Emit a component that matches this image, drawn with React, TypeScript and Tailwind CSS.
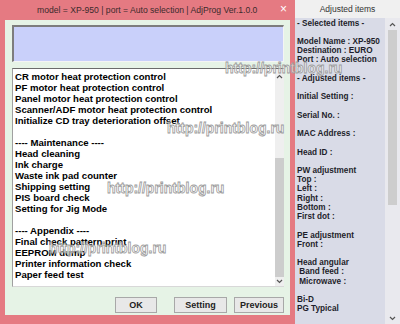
import React from "react";

const listLines = [
  "CR motor heat protection control",
  "PF motor heat protection control",
  "Panel motor heat protection control",
  "Scanner/ADF motor heat protection control",
  "Initialize CD tray deterioration offset",
  "",
  "---- Maintenance ----",
  "Head cleaning",
  "Ink charge",
  "Waste ink pad counter",
  "Shipping setting",
  "PIS board check",
  "Setting for Jig Mode",
  "",
  "---- Appendix ----",
  "Final check pattern print",
  "EEPROM dump",
  "Printer information check",
  "Paper feed test",
];

const rightLines = [
  "- Selected items -",
  "",
  "Model Name : XP-950",
  "Destination : EURO",
  "Port : Auto selection",
  "",
  "- Adjusted items -",
  "",
  "Initial Setting :",
  "",
  "Serial No. :",
  "",
  "MAC Address :",
  "",
  "Head ID :",
  "",
  "PW adjustment",
  "Top :",
  "Left :",
  "Right :",
  "Bottom :",
  "First dot :",
  "",
  "PE adjustment",
  "Front :",
  "",
  "Head angular",
  "\u00a0Band feed :",
  "\u00a0Microwave :",
  "",
  "Bi-D",
  "PG Typical",
];

function Chevron({ up }: { up?: boolean }) {
  return (
    <svg width="7" height="5" viewBox="0 0 7 5">
      <path
        d={up ? "M1 4 L3.5 1.5 L6 4" : "M1 1 L3.5 3.5 L6 1"}
        fill="none"
        stroke="#555"
        strokeWidth="1.2"
      />
    </svg>
  );
}

const marks = [
  { x: 225, y: 61 },
  { x: 167, y: 121 },
  { x: 107, y: 181 },
  { x: 49, y: 241 },
];

export default function App() {
  return (
    <div
      className="w-[400px] h-[324px] flex overflow-hidden relative bg-white"
      style={{ fontFamily: '"Liberation Sans", Arial, sans-serif' }}
    >
      {/* Left window */}
      <div className="w-[295px] h-full bg-[#e57a82] flex flex-col shrink-0">
        <div className="h-[20px] flex items-center pl-[37px] pr-[6px]">
          <span className="text-[8.6px] text-[#3a2a2c] leading-none whitespace-nowrap">
            model = XP-950 | port = Auto selection | AdjProg Ver.1.0.0
          </span>
          <span className="flex-1" />
          <span className="text-[12px] text-white leading-none mr-[2px] mb-[2px]">×</span>
        </div>
        <div className="mx-[5px] flex-1 bg-[#e6f3e6] flex flex-col pt-[5px] pl-[7px] pr-[6px]">
          <div className="h-[37px] bg-[#c9d0fa] border-t-2 border-l-2 border-[#7d7d7d] border-r border-b border-r-[#f4f4f4] border-b-[#f4f4f4]" />
          <div className="mt-[6px] h-[219px] bg-white border-t border-t-[#6b6b6b] border-l border-l-[#a0a0a0] border-b border-b-[#d8d8d8] flex">
            <div className="flex-1 pl-[2px] pt-[2px]">
              {listLines.map((l, i) => (
                <div
                  key={i}
                  className="h-[11px] leading-[11px] text-[9.6px] font-bold text-black whitespace-nowrap"
                >
                  {l || "\u00a0"}
                </div>
              ))}
            </div>
            <div className="w-[9px] bg-[#efefef] flex flex-col items-center">
              <div className="h-[12px] flex items-center justify-center pt-[3px]">
                <Chevron up />
              </div>
              <div className="flex-1 flex flex-col w-full">
                <div className="h-[77px]" />
                <div className="flex-1 bg-[#cdcdcd]" />
              </div>
              <div className="h-[9px] flex items-center justify-center">
                <Chevron />
              </div>
            </div>
          </div>
          <div className="mt-[10px] h-[16px] flex justify-end">
            <button className="w-[42px] h-full mr-[17px] bg-[#e8e8e8] border border-[#a8a8a8] text-[9px] font-bold text-[#222] leading-none">
              OK
            </button>
            <button className="w-[53px] h-full mr-[7px] bg-[#e8e8e8] border border-[#a8a8a8] text-[9px] font-bold text-[#222] leading-none">
              Setting
            </button>
            <button className="w-[50px] h-full bg-[#e8e8e8] border border-[#a8a8a8] text-[9px] font-bold text-[#222] leading-none">
              Previous
            </button>
          </div>
        </div>
        <div className="h-[9px]" />
      </div>

      {/* Right panel */}
      <div className="flex-1 h-full flex flex-col">
        <div className="h-[18px] bg-[#f0f0f0] flex items-center justify-center">
          <span className="text-[8.5px] text-[#333] leading-none">Adjusted items</span>
        </div>
        <div className="flex-1 flex">
          <div className="flex-1 bg-[#d9dbe7] pl-[2px] pt-[0.5px] overflow-hidden">
            {rightLines.map((l, i) => (
              <div
                key={i}
                className="h-[9.23px] leading-[9.23px] text-[8.2px] font-bold text-[#1e1e2a] whitespace-nowrap"
              >
                {l || "\u00a0"}
              </div>
            ))}
          </div>
          <div className="w-[15px] bg-[#e9e9ee] flex flex-col items-center">
            <div className="h-[12px] flex items-center justify-center">
              <Chevron up />
            </div>
            <div className="w-[9px] h-[175px] bg-[#cdcdcd]" />
            <div className="flex-1" />
            <div className="h-[12px] flex items-center justify-center">
              <Chevron />
            </div>
          </div>
        </div>
      </div>

      {/* Watermarks */}
      {marks.map((m, i) => (
        <div
          key={i}
          className="absolute pointer-events-none text-[14px] font-bold leading-[15px] whitespace-nowrap text-[rgba(255,255,255,0.55)] [-webkit-text-stroke:0.8px_#9c9c9c]"
          style={{ left: m.x, top: m.y }}
        >
          http://printblog.ru
        </div>
      ))}
    </div>
  );
}
